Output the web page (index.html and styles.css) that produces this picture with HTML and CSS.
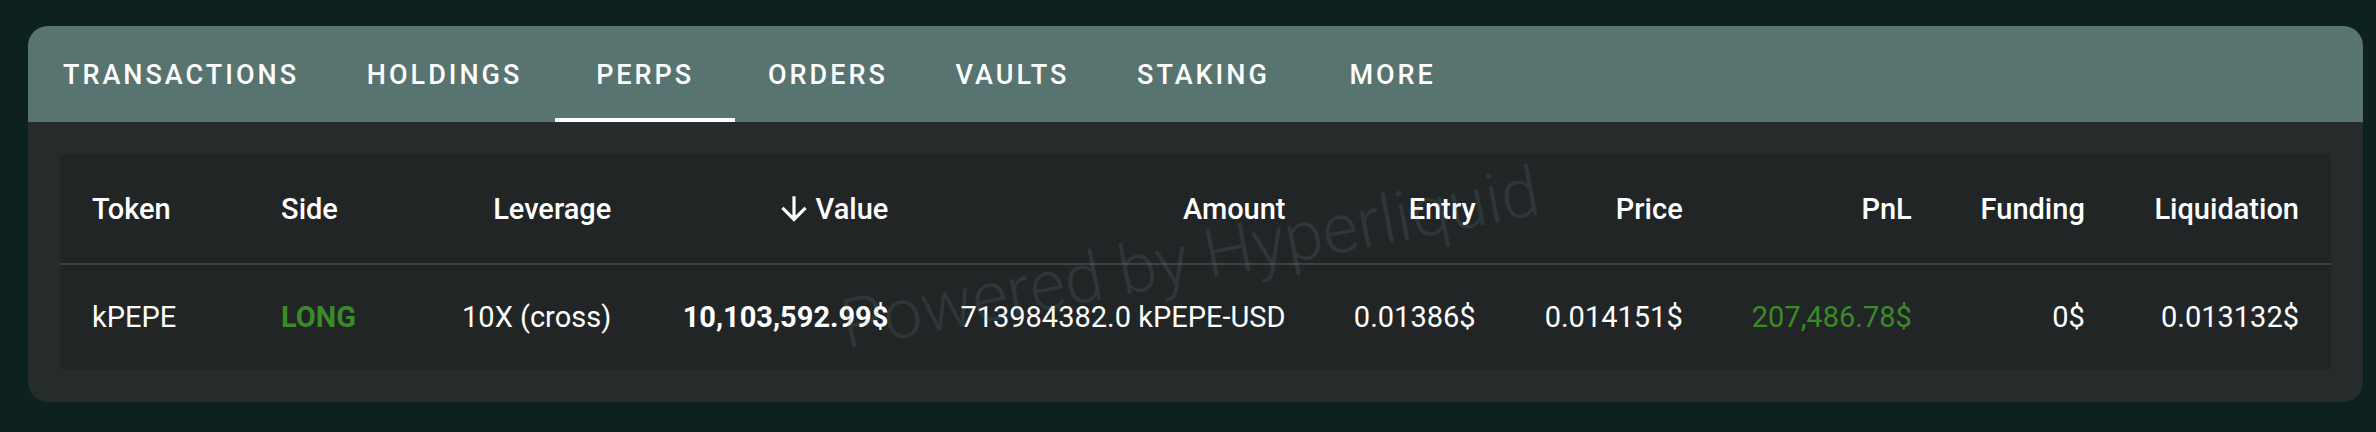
FILE: index.html
```html
<!DOCTYPE html>
<html lang="en">
<head>
<meta charset="utf-8">
<title>Perps</title>
<link rel="stylesheet" href="styles.css">
</head>
<body>
<div class="card">
  <nav class="tabs">
    <div class="tab">Transactions</div>
    <div class="tab">Holdings</div>
    <div class="tab active">Perps</div>
    <div class="tab">Orders</div>
    <div class="tab">Vaults</div>
    <div class="tab">Staking</div>
    <div class="tab">More</div>
  </nav>
  <div class="body">
    <table class="grid">
      <colgroup>
        <col class="c-token"><col class="c-side"><col class="c-lev"><col class="c-value"><col class="c-amount">
        <col class="c-entry"><col class="c-price"><col class="c-pnl"><col class="c-funding"><col class="c-liq">
      </colgroup>
      <thead>
        <tr>
          <th class="left">Token</th>
          <th class="left">Side</th>
          <th>Leverage</th>
          <th><span class="sort"><svg class="arrow" viewBox="0 0 24 24"><path d="M20 12l-1.41-1.41L13 16.17V4h-2v12.17l-5.58-5.59L4 12l8 8 8-8z"/></svg><span>Value</span></span></th>
          <th>Amount</th>
          <th>Entry</th>
          <th>Price</th>
          <th>PnL</th>
          <th>Funding</th>
          <th>Liquidation</th>
        </tr>
      </thead>
      <tbody>
        <tr>
          <td class="left">kPEPE</td>
          <td class="left long">LONG</td>
          <td>10X (cross)</td>
          <td class="strong">10,103,592.99$</td>
          <td>713984382.0 kPEPE-USD</td>
          <td>0.01386$</td>
          <td>0.014151$</td>
          <td class="gain">207,486.78$</td>
          <td>0$</td>
          <td>0.013132$</td>
        </tr>
      </tbody>
    </table>
  </div>
  <div class="watermark">Powered by Hyperliquid</div>
</div>
</body>
</html>
```

FILE: styles.css
```css
html, body {
  margin: 0;
  padding: 0;
  background: #0d211f;
  font-family: Roboto, "Liberation Sans", sans-serif;
  color: #ffffff;
}

.card {
  position: relative;
  margin: 26px 13px 0 28px;
  height: 376px;
  border-radius: 20px;
  overflow: hidden;
  background: #262b2b;
  display: flex;
  flex-direction: column;
}

.tabs {
  display: flex;
  height: 96px;
  background: #587470;
  flex-shrink: 0;
}

.tab {
  position: relative;
  min-width: 180px;
  padding: 2px 35px 0;
  box-sizing: border-box;
  display: flex;
  align-items: center;
  justify-content: center;
  text-transform: uppercase;
  font-size: 27px;
  font-weight: 500;
  letter-spacing: 3px;
  margin-right: -2.2px;
  color: #ffffff;
}

.tab.active::after {
  content: "";
  position: absolute;
  left: 0;
  right: 0;
  bottom: 0;
  height: 4px;
  background: #ffffff;
}

.body {
  padding: 32px;
  flex: 1;
}

.grid {
  width: 100%;
  table-layout: fixed;
  border-collapse: collapse;
  background: #212526;
}

.c-token { width: 189px; }
.c-side { width: 180px; }
.c-lev { width: 214px; }
.c-value { width: 277px; }
.c-amount { width: 397px; }
.c-entry { width: 190px; }
.c-price { width: 207px; }
.c-pnl { width: 229px; }
.c-funding { width: 173px; }
.c-liq { width: 214px; }

.grid th, .grid td {
  padding: 0 32px;
  text-align: right;
  white-space: nowrap;
  font-size: 29px;
  line-height: 38px;
  vertical-align: middle;
}

.grid th {
  height: 109px;
  font-weight: 500;
  border-bottom: 2px solid #3e4344;
}

.grid td {
  height: 104px;
  font-weight: 400;
}

.grid .left {
  text-align: left;
}

.sort {
  display: inline-flex;
  align-items: center;
  vertical-align: top;
  height: 38px;
}

.arrow {
  width: 38px;
  height: 38px;
  fill: #ffffff;
  margin-right: 3px;
}

.long {
  color: #3a8a28;
  font-weight: 700 !important;
}

.strong {
  font-weight: 700 !important;
}

.gain {
  color: #3a8a28;
}

.watermark {
  position: absolute;
  left: 1162px;
  top: 232px;
  transform: translate(-50%, -50%) rotate(-11deg);
  white-space: nowrap;
  font-size: 69px;
  font-weight: 300;
  color: rgba(110, 150, 140, 0.17);
  pointer-events: none;
}
```
